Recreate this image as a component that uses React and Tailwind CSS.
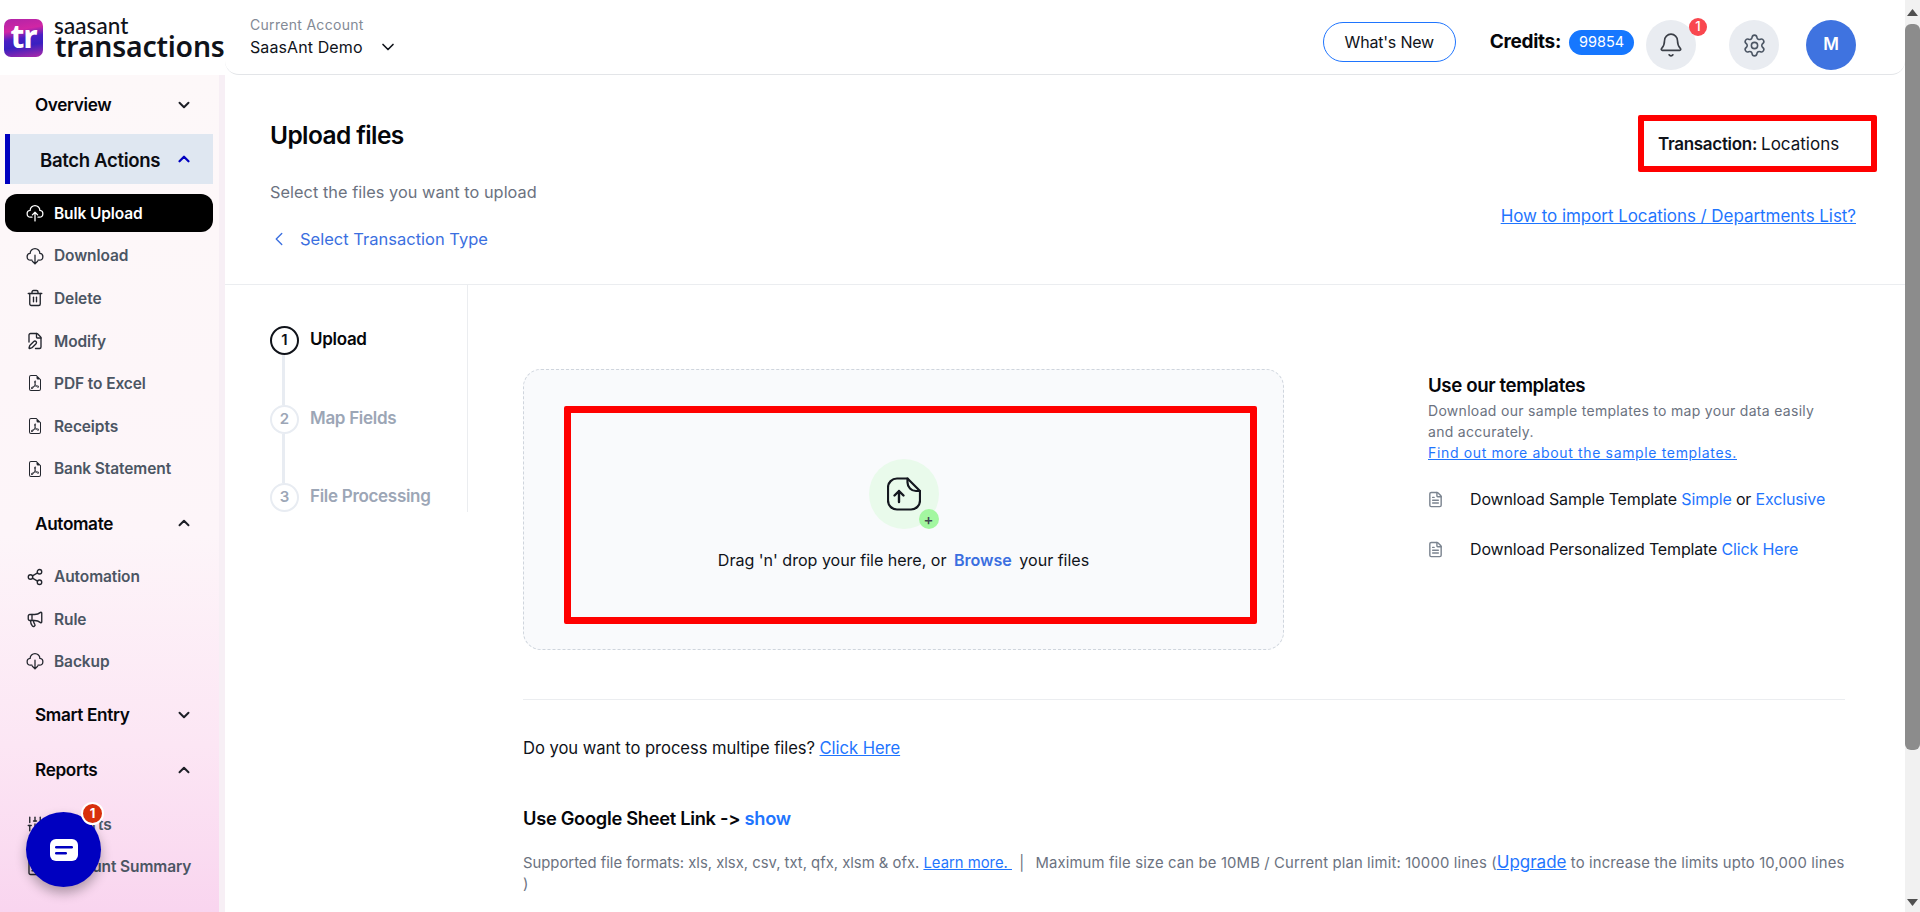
import React from "react";
import { Trash2, FilePen, Share2, Megaphone, SlidersVertical, Bell, Settings, ChevronDown, ChevronUp, ChevronLeft, FileText, FileSpreadsheet } from "lucide-react";
import { BsFileEarmarkPdf } from "react-icons/bs";

const font = "font-['Inter','Liberation_Sans',sans-serif]";

function CloudUp() {
  return (
    <svg width="22" height="22" viewBox="0 0 24 24" fill="none" stroke="currentColor" strokeWidth="1.7" strokeLinecap="round" strokeLinejoin="round">
      <path d="M8 17.500H6a4.500 4.500 0 0 1-.5-8.970 6.500 6.500 0 0 1 13 0A4.500 4.500 0 0 1 18 17.500h-2" />
      <path d="M12 22.500V11M8.500 14.500L12 11l3.500 3.500" />
    </svg>
  );
}

function CloudDown() {
  return (
    <svg width="22" height="22" viewBox="0 0 24 24" fill="none" stroke="currentColor" strokeWidth="1.7" strokeLinecap="round" strokeLinejoin="round">
      <path d="M8 17.500H6a4.500 4.500 0 0 1-.5-8.970 6.500 6.500 0 0 1 13 0A4.500 4.500 0 0 1 18 17.500h-2" />
      <path d="M12 11v11.500M8.500 19L12 22.500l3.500-3.500" />
    </svg>
  );
}

function Section({ label, open, active, shift }) {
  if (active) {
    return (
      <div className="h-[50px] w-[208px] ml-[5px] flex items-center border-l-[5px] border-[#0000c0] bg-[#dfe7f1] pl-[30px] pr-[20px] justify-between">
        <span className="text-[18.6px] font-semibold text-[#0c0d12] tracking-[-0.35px] whitespace-nowrap pt-[3px]">{label}</span>
        <ChevronUp size={18} strokeWidth={3} className="text-[#0000c0]" />
      </div>
    );
  }
  const Ic = open ? ChevronUp : ChevronDown;
  return (
    <div className="h-[50px] w-[208px] ml-[5px] flex items-center pl-[30px] pr-[20px] justify-between">
      <span className={`text-[17.2px] font-semibold text-[#05060a] tracking-[-0.35px] ${shift ? "pt-[2px]" : ""}`}>{label}</span>
      <Ic size={18} strokeWidth={2.6} className="text-[#1d1f26]" />
    </div>
  );
}

function Item({ icon, label, active }) {
  return (
    <div className={`h-[38px] w-[208px] ml-[5px] rounded-[12px] flex items-center pl-[21px] gap-[10px] ${active ? "bg-black text-white" : "text-[#4b5563]"}`}>
      <span className={`w-[18px] h-[20px] flex items-center justify-center shrink-0 ${active ? "text-white" : "text-[#23262e]"}`}>{icon}</span>
      <span className="text-[15.5px] font-semibold tracking-[-0.1px] whitespace-nowrap pt-[1px]">{label}</span>
    </div>
  );
}

function Step({ n, label, active, last }) {
  return (
    <div className="flex gap-[11px] relative h-[78.5px]">
      <div className="flex flex-col w-[29px] items-center shrink-0">
        <div className={`w-[29px] h-[29px] rounded-full flex items-center justify-center text-[15px] font-semibold bg-white shrink-0 ${active ? "border-[2px] border-[#10131a] text-[#10131a]" : "border-[2px] border-[#e8ecf2] text-[#9ca6b6]"}`}>{n}</div>
        {!last && <div className="w-[3px] flex-1 bg-[#e8ecf2] -ml-[3px]" />}
      </div>
      <span className={`text-[17px] font-semibold leading-[27px] tracking-[-0.3px] whitespace-nowrap ${active ? "text-[#05060a]" : "text-[#9ca6b6]"}`}>{label}</span>
    </div>
  );
}

export default function App() {
  return (
    <div className={`w-[1920px] h-[912px] overflow-hidden flex bg-white ${font}`}>
      <div className="w-[1905px] flex flex-col h-full">
        {/* Top bar */}
        <header className="h-[75px] flex shrink-0 bg-white">
          <div className="w-[225px] shrink-0 flex items-start pl-[4px] pt-[19px] gap-[11px]">
            <div className="w-[39px] h-[38px] shrink-0 rounded-[7px] flex items-center justify-center bg-[linear-gradient(170deg,#b024a8_0%,#d126a4_30%,#4a1fc4_50%,#3820c0_68%,#b02aa8_100%)]">
              <span className="text-white font-bold text-[32px] leading-none tracking-[-1px] font-['Noto_Sans',sans-serif] -mt-[4px]">tr</span>
            </div>
            <div className="flex flex-col -mt-[1px]">
              <span className="text-[22.5px] leading-[16px] font-medium text-[#10131a] font-['Lato',sans-serif] tracking-[0.1px]">saasant</span>
              <span className="text-[28.4px] leading-[31px] font-semibold text-[#10131a] font-['Noto_Sans',sans-serif] tracking-[-0.2px] -mt-[3px] ml-[1px] whitespace-nowrap">transactions</span>
            </div>
          </div>
          <div className="flex-1 flex border-b border-[#e3e5e8] rounded-b-[14px] pl-[25px] pr-[49px]">
            <div className="flex flex-col pt-[15px]">
              <span className="text-[14px] leading-[20px] text-[#838a96] tracking-[0.3px]">Current Account</span>
              <div className="flex items-center gap-[15px]">
                <span className="text-[16px] leading-[24px] text-[#10131a] tracking-[0.1px]">SaasAnt Demo</span>
                <ChevronDown size={20} strokeWidth={2} className="text-[#10131a]" />
              </div>
            </div>
            <div className="ml-auto flex items-center pt-[16px] h-[74px]">
              <div className="w-[133px] h-[40px] -mt-[6px] rounded-full border border-[#1f75fe] flex items-center justify-center text-[16px] text-[#10131a] tracking-[-0.2px] whitespace-nowrap">What's New</div>
              <span className="ml-[34px] -mt-[6px] text-[19px] font-bold text-[#05060a] tracking-[-0.3px]">Credits:</span>
              <span className="ml-[8px] -mt-[6px] w-[65px] h-[25px] rounded-full bg-[#1677ff] text-white text-[14.5px] flex items-center justify-center">99854</span>
              <div className="ml-[12px] -mt-[1px] w-[50px] h-[50px] rounded-full bg-[#e9ecf1] flex items-center justify-center relative">
                <Bell size={26} strokeWidth={1.5} className="text-[#3b3f47]" />
                <span className="absolute -top-[2px] -right-[11px] w-[18px] h-[18px] rounded-full bg-[#f9474f] text-white text-[13px] font-medium flex items-center justify-center">1</span>
              </div>
              <div className="ml-[33px] w-[50px] h-[50px] rounded-full bg-[#e9ecf1] flex items-center justify-center">
                <Settings size={25} strokeWidth={1.5} className="text-[#4b5563]" />
              </div>
              <div className="ml-[27px] w-[50px] h-[50px] rounded-full bg-[#3f73e0] flex items-center justify-center text-white text-[17px] font-semibold">M</div>
            </div>
          </div>
        </header>

        <div className="flex-1 flex min-h-0">
          {/* Sidebar */}
          <aside className="w-[225px] shrink-0 border-r-[6px] border-[#f7eff5] bg-[linear-gradient(180deg,#fdf8f9_0%,#fdf5f9_55%,#fce6f4_80%,#f9d5ef_100%)] flex flex-col pt-[5px] relative">
            <Section label="Overview" />
            <div className="mt-[4px]"><Section label="Batch Actions" active /></div>
            <div className="mt-[10px] flex flex-col gap-[4.6px]">
              <Item active label="Bulk Upload" icon={<CloudUp />} />
              <Item label="Download" icon={<CloudDown />} />
              <Item label="Delete" icon={<Trash2 size={20} strokeWidth={1.8} />} />
              <Item label="Modify" icon={<FilePen size={20} strokeWidth={1.8} />} />
              <Item label="PDF to Excel" icon={<BsFileEarmarkPdf size={16} />} />
              <Item label="Receipts" icon={<BsFileEarmarkPdf size={16} />} />
              <Item label="Bank Statement" icon={<BsFileEarmarkPdf size={16} />} />
            </div>
            <div className="mt-[10px]"><Section label="Automate" open shift /></div>
            <div className="mt-[10px] flex flex-col gap-[4.2px]">
              <Item label="Automation" icon={<Share2 size={20} strokeWidth={1.8} />} />
              <Item label="Rule" icon={<Megaphone size={20} strokeWidth={1.8} />} />
              <Item label="Backup" icon={<CloudDown />} />
            </div>
            <div className="mt-[10px]"><Section label="Smart Entry" /></div>
            <div className="mt-[5px]"><Section label="Reports" open /></div>
            <div className="mt-[10px] flex flex-col gap-[4.6px]">
              <Item label="Reports" icon={<SlidersVertical size={20} strokeWidth={1.8} />} />
              <Item label="Account Summary" icon={<FileSpreadsheet size={20} strokeWidth={1.8} />} />
            </div>
            {/* Chat launcher */}
            <div className="absolute left-[26px] top-[737px] w-[75px] h-[75px] rounded-full bg-[#0000c0] shadow-[0_6px_12px_rgba(0,0,0,0.3)] flex items-center justify-center">
              <svg width="28" height="22" viewBox="0 0 28 22"><rect width="28" height="22" rx="6" fill="#fff" /><rect x="5" y="7" width="18" height="2.4" rx="1.2" fill="#0000c0" /><rect x="5" y="13" width="12" height="2.4" rx="1.2" fill="#0000c0" /></svg>
              <span className="absolute -top-[10px] -right-[3px] w-[23px] h-[23px] rounded-full bg-[#d8300c] border-[2px] border-white text-white text-[13px] font-bold flex items-center justify-center">1</span>
            </div>
          </aside>

          {/* Main */}
          <main className="flex-1 min-w-0 flex flex-col">
            <div className="h-[210px] shrink-0 border-b border-[#ebedf0] pl-[45px] pr-[49px] flex justify-between">
              <div className="flex flex-col">
                <h1 className="text-[24.5px] leading-[32px] font-semibold text-[#05060a] tracking-[-0.6px] mt-[44px]">Upload files</h1>
                <p className="text-[16.3px] leading-[24px] text-[#6b7280] mt-[29px] tracking-[0.05px]">Select the files you want to upload</p>
                <div className="flex items-center mt-[23px] text-[#3b6fe0]">
                  <ChevronLeft size={22} strokeWidth={1.5} className="-ml-[2px]" />
                  <span className="ml-[10px] text-[16.5px] leading-[24px]">Select Transaction Type</span>
                </div>
              </div>
              <div className="flex flex-col items-end">
                <div className="w-[239px] h-[57px] mt-[40px] -mr-[21px] border-[6px] border-[#ff0000] rounded-[2px] flex items-center pl-[14px] pt-[2px] text-[17px] text-[#10131a] whitespace-nowrap">
                  <b className="font-semibold tracking-[-0.3px]">Transaction:</b><span className="ml-[4px]">Locations</span>
                </div>
                <a className="mt-[32px] text-[17px] leading-[24px] text-[#1f75fe] underline tracking-[-0.05px] whitespace-nowrap">How to import Locations / Departments List?</a>
              </div>
            </div>

            <div className="flex-1 flex min-h-0">
              <div className="w-[243px] h-[227px] shrink-0 border-r border-[#ebedf0] pl-[45px] pt-[41px]">
                <Step n={1} label="Upload" active />
                <Step n={2} label="Map Fields" />
                <Step n={3} label="File Processing" last />
              </div>

              <div className="flex-1 min-w-0 pl-[55px] pr-[60px] pt-[84px]">
                <div className="flex">
                  <div className="w-[761px] h-[281px] rounded-[18px] border border-dashed border-[#cfd5dd] bg-[#f9fafc] pl-[40px] pr-[26px] pt-[36px] pb-[25px] shrink-0">
                    <div className="w-full h-full border-[7px] border-[#ff0000] rounded-[2px] flex flex-col items-center pr-[14px]">
                      <div className="w-[70px] h-[70px] mt-[46px] rounded-full bg-[#e9faeb] flex items-center justify-center relative">
                        <svg width="34" height="34" viewBox="0 0 34 34" fill="none" stroke="#14171f" strokeWidth="2.2" strokeLinejoin="round" strokeLinecap="round">
                          <path d="M10 1.500h10.500L33 14v9.500a9 9 0 0 1-9 9H10a9 9 0 0 1-9-9v-13a9 9 0 0 1 9-9z" />
                          <path d="M20.500 1.500v4a8.500 8.500 0 0 0 8.500 8.500h4" />
                          <path d="M12 25V14M7.500 18.500L12 14l4.500 4.500" strokeWidth="2.4" />
                        </svg>
                        <span className="absolute right-0 bottom-0 w-[20px] h-[20px] rounded-full bg-[#a3f7a0] flex items-center justify-center text-[#3d4450] text-[15px] leading-none font-medium">+</span>
                      </div>
                      <p className="mt-[19px] text-[16.1px] leading-[24px] text-[#10131a] whitespace-nowrap tracking-[-0.03px]">Drag 'n' drop your file here, or <b className="font-semibold text-[#3b6fe0] ml-[3px] mr-[3px]">Browse</b> your files</p>
                    </div>
                  </div>
                  <div className="ml-[144px] w-[400px] shrink-0">
                    <h3 className="text-[18.7px] leading-[24px] font-semibold text-[#05060a] tracking-[-0.4px] mt-[5px]">Use our templates</h3>
                    <p className="text-[14px] leading-[21px] text-[#6b7280] mt-[2px] w-[395px] tracking-[0.3px]">Download our sample templates to map your data easily and accurately.</p>
                    <a className="block text-[14px] leading-[21px] text-[#1f75fe] underline tracking-[0.65px]">Find out more about the sample templates.</a>
                    <div className="flex items-center mt-[23px] h-[26px]">
                      <FileText size={17} strokeWidth={2} className="text-[#7b8490] -ml-[1px]" />
                      <span className="ml-[26px] text-[16px] text-[#10131a] tracking-[-0.15px]">Download Sample Template <span className="text-[#1f75fe]">Simple</span> or <span className="text-[#1f75fe]">Exclusive</span></span>
                    </div>
                    <div className="flex items-center mt-[24px] h-[26px]">
                      <FileText size={17} strokeWidth={2} className="text-[#7b8490] -ml-[1px]" />
                      <span className="ml-[26px] text-[16px] text-[#10131a] tracking-[-0.15px]">Download Personalized Template <span className="text-[#1f75fe]">Click Here</span></span>
                    </div>
                  </div>
                </div>

                <div className="h-px bg-[#ebedf0] mt-[49px]" />
                <p className="mt-[36px] text-[16.6px] leading-[24px] text-[#10131a] tracking-[-0.05px]">Do you want to process multipe files? <a className="text-[#1f75fe] underline">Click Here</a></p>
                <p className="mt-[45px] text-[18.3px] leading-[26px] font-semibold text-[#05060a] tracking-[-0.3px]">Use Google Sheet Link -&gt; <span className="text-[#1f75fe]">show</span></p>
                <p className="mt-[21px] text-[14.85px] leading-[21px] text-[#6b7280] tracking-[-0.01px]">Supported file formats: xls, xlsx, csv, txt, qfx, xlsm &amp; ofx. <a className="text-[#1f75fe] underline">Learn more. </a><span className="ml-[3px] mr-[3px]">&nbsp;|&nbsp;</span> <span className="tracking-[0.14px]">Maximum file size can be 10MB / Current plan limit: 10000 lines (<a className="text-[#1f75fe] underline text-[17px] tracking-normal">Upgrade</a> to increase the limits upto 10,000 lines )</span></p>
              </div>
            </div>
          </main>
        </div>
      </div>

      {/* Browser scrollbar */}
      <div className="w-[15px] h-full bg-[#f1f1f1] flex flex-col items-center shrink-0">
        <div className="h-[24px] flex items-center justify-center text-[#505050]">
          <svg width="11" height="7" viewBox="0 0 11 7"><path d="M5.500 0L11 7H0z" fill="currentColor" /></svg>
        </div>
        <div className="w-[15px] h-[726px] rounded-[6px] bg-[#8c8c8c]" />
        <div className="mt-auto h-[20px] flex items-center justify-center text-[#505050]">
          <svg width="11" height="7" viewBox="0 0 11 7"><path d="M5.500 7L0 0h11z" fill="currentColor" /></svg>
        </div>
      </div>
    </div>
  );
}
